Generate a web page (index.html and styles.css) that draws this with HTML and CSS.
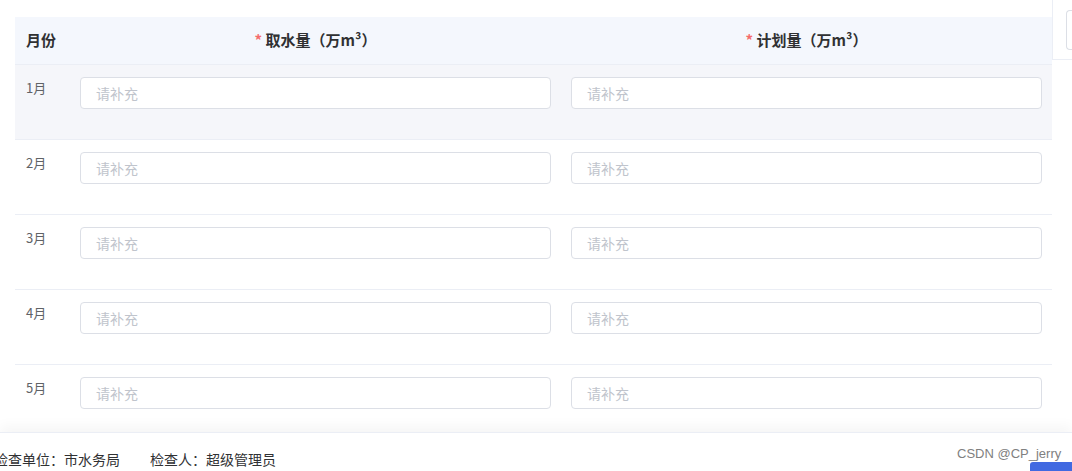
FILE: index.html
```html
<!DOCTYPE html>
<html lang="zh-CN">
<head>
<meta charset="utf-8">
<title>取水计划</title>
<link rel="stylesheet" href="styles.css">
</head>
<body>
<div class="page">
  <div class="main">
    <div class="content">
      <div class="table">
        <div class="row head">
          <div class="cell-month">月份</div>
          <div class="cell-title"><span class="req">*</span> 取水量（万m³）</div>
          <div class="cell-title"><span class="req">*</span> 计划量（万m³）</div>
        </div>
        <div class="row hover">
          <div class="cell-month label">1月</div>
          <div class="input">请补充</div>
          <div class="input">请补充</div>
        </div>
        <div class="row">
          <div class="cell-month label">2月</div>
          <div class="input">请补充</div>
          <div class="input">请补充</div>
        </div>
        <div class="row">
          <div class="cell-month label">3月</div>
          <div class="input">请补充</div>
          <div class="input">请补充</div>
        </div>
        <div class="row">
          <div class="cell-month label">4月</div>
          <div class="input">请补充</div>
          <div class="input">请补充</div>
        </div>
        <div class="row">
          <div class="cell-month label">5月</div>
          <div class="input">请补充</div>
          <div class="input">请补充</div>
        </div>
      </div>
    </div>
    <div class="side">
      <div class="side-top"><div class="side-box"></div></div>
    </div>
  </div>
  <div class="footer">
    <div class="info">
      <span>检查单位：市水务局</span>
      <span>检查人：超级管理员</span>
    </div>
    <div class="btn">预览</div>
    <div class="watermark">CSDN @CP_jerry</div>
  </div>
</div>
</body>
</html>
```

FILE: styles.css
```css
* { box-sizing: border-box; }
html, body { margin: 0; padding: 0; }
body {
  width: 1072px;
  height: 471px;
  overflow: hidden;
  background: #fff;
  font-family: "Noto Sans CJK SC", "Noto Sans", sans-serif;
  color: #606266;
}
.page {
  display: flex;
  flex-direction: column;
  height: 471px;
}
.main {
  flex: 1;
  display: flex;
  overflow: hidden;
}
.content {
  width: 1052px;
  padding: 17px 0 0 15px;
}
.table { width: 1037px; }
.row {
  display: grid;
  grid-template-columns: 34px 1fr 1fr;
  column-gap: 20px;
  padding: 12px 10px 30px 11px;
  border-bottom: 1px solid #ebeef5;
}
.row.head {
  background: #f4f7fd;
  padding: 0 10px 3px 11px;
  height: 48px;
  align-items: center;
  font-size: 15px;
  font-weight: 700;
  color: #303133;
}
.row.hover { background: #f5f6fa; }
.cell-month { white-space: nowrap; }
.cell-title { text-align: center; white-space: nowrap; }
.req { color: #f56c6c; }
.label {
  font-size: 13px;
  line-height: 20px;
  padding-top: 1px;
  color: #606266;
}
.input {
  height: 32px;
  border: 1px solid #dcdfe6;
  border-radius: 4px;
  background: #fff;
  padding: 0 15px;
  font-size: 14px;
  line-height: 30px;
  color: #c0c4cc;
}
.side {
  width: 20px;
}
.side-top {
  height: 60px;
  border-left: 1px solid #ebeef5;
  border-bottom: 1px solid #ebeef5;
  padding: 10px 0 0 13px;
}
.side-box {
  height: 40px;
  border: 1px solid #dcdfe6;
  border-right: none;
  border-radius: 4px 0 0 4px;
}
.footer {
  position: relative;
  height: 39px;
  flex: none;
  background: #fff;
  border-top: 1px solid #ebeef5;
  box-shadow: 0 -6px 12px rgba(0, 0, 0, 0.04);
}
.info {
  display: flex;
  gap: 30px;
  margin-left: -6px;
  padding-top: 16px;
  font-size: 14px;
  line-height: 20px;
  color: #303133;
}
.btn {
  position: absolute;
  left: 1030px;
  top: 29px;
  width: 60px;
  height: 30px;
  background: #4169e1;
  border-radius: 3px;
  color: #fff;
  font-size: 14px;
  line-height: 30px;
  padding-left: 20px;
}
.watermark {
  position: absolute;
  left: 957px;
  top: 13px;
  font-family: "Liberation Sans", Arial, sans-serif;
  font-size: 13px;
  color: #808080;
  white-space: nowrap;
}
```
